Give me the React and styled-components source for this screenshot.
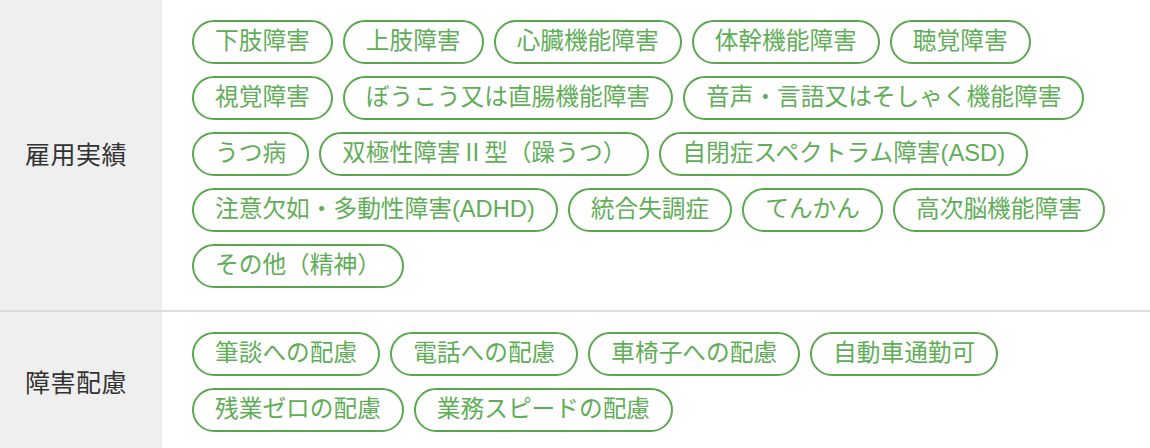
import React from "react";
import styled, { createGlobalStyle } from "styled-components";

const GlobalStyle = createGlobalStyle`
  body {
    margin: 0;
    background: #fff;
    font-family: "Noto Sans CJK JP", "Noto Sans", sans-serif;
  }
`;

const Table = styled.div`
  display: grid;
  grid-template-columns: 162px 1fr;
  width: 1150px;
`;

const Label = styled.div`
  display: flex;
  align-items: center;
  padding: 0 0 4px 25px;
  background-color: #efefef;
  color: #333;
  font-size: 25px;
  letter-spacing: 0.02em;
  border-top: ${({ $first }) => ($first ? "none" : "2px solid #dcdcdc")};
`;

const Cell = styled.div`
  display: flex;
  flex-wrap: wrap;
  align-content: flex-start;
  gap: 12px 10px;
  padding: 20px 30px 22px;
  border-top: ${({ $first }) => ($first ? "none" : "2px solid #dcdcdc")};
`;

const Tag = styled.span`
  display: inline-flex;
  align-items: center;
  height: 44px;
  box-sizing: border-box;
  padding: 0 21px;
  border: 2px solid #5aa84e;
  border-radius: 22px;
  color: #5fae57;
  font-family: "Liberation Sans", "Noto Sans CJK JP", sans-serif;
  font-size: 23.7px;
  line-height: 1;
  white-space: nowrap;
`;

const sections = [
  {
    title: "雇用実績",
    tags: [
      "下肢障害",
      "上肢障害",
      "心臓機能障害",
      "体幹機能障害",
      "聴覚障害",
      "視覚障害",
      "ぼうこう又は直腸機能障害",
      "音声・言語又はそしゃく機能障害",
      "うつ病",
      "双極性障害Ⅱ型（躁うつ）",
      "自閉症スペクトラム障害(ASD)",
      "注意欠如・多動性障害(ADHD)",
      "統合失調症",
      "てんかん",
      "高次脳機能障害",
      "その他（精神）",
    ],
  },
  {
    title: "障害配慮",
    tags: [
      "筆談への配慮",
      "電話への配慮",
      "車椅子への配慮",
      "自動車通勤可",
      "残業ゼロの配慮",
      "業務スピードの配慮",
    ],
  },
];

const App = () => {
  return (
    <>
      <GlobalStyle />
      <Table>
        {sections.map((section, i) => (
          <React.Fragment key={section.title}>
            <Label $first={i === 0}>{section.title}</Label>
            <Cell $first={i === 0}>
              {section.tags.map((tag) => (
                <Tag key={tag}>{tag}</Tag>
              ))}
            </Cell>
          </React.Fragment>
        ))}
      </Table>
    </>
  );
};

export default App;
